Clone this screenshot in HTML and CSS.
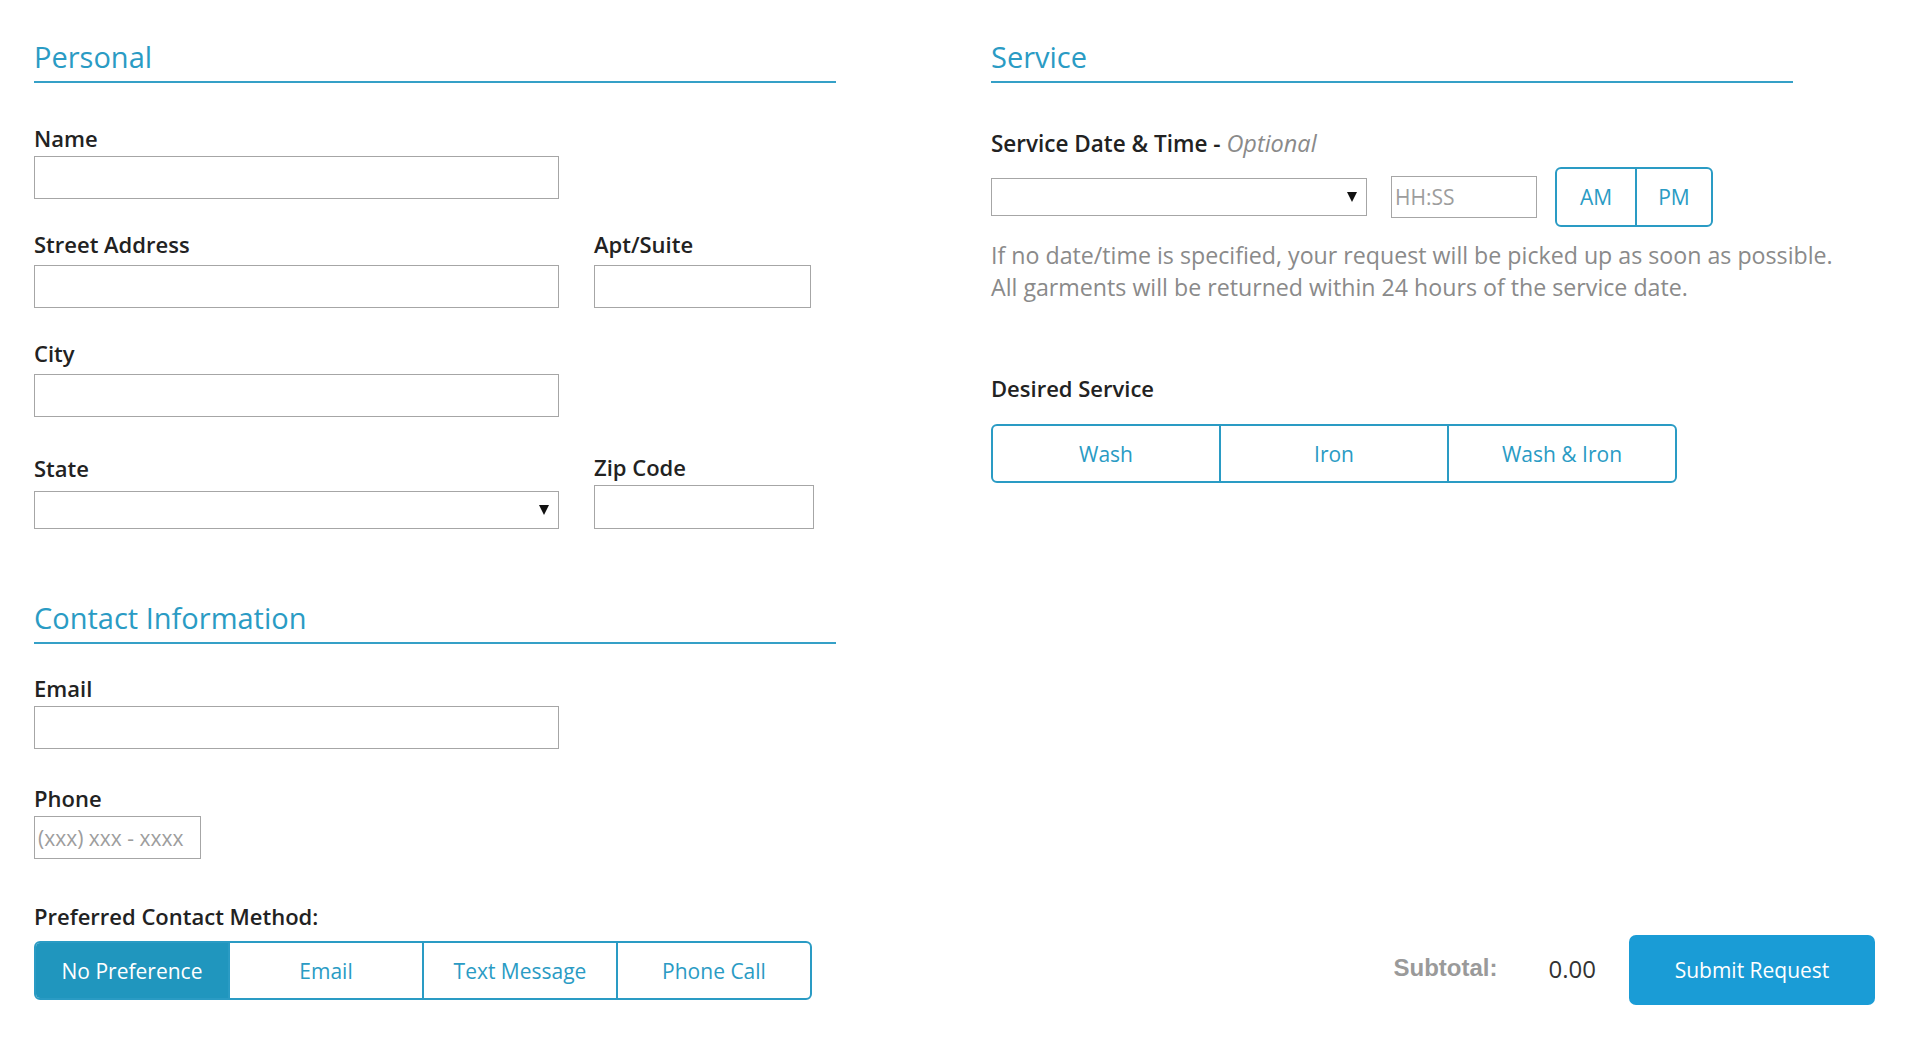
FILE: index.html
```html
<!DOCTYPE html>
<html lang="en">
<head>
<meta charset="utf-8">
<title>Service Request</title>
<link rel="stylesheet" href="styles.css">
</head>
<body>
<form class="page">
  <section class="col col-left">
    <h2 class="section-title">Personal</h2>

    <div class="field gap-first">
      <label class="label">Name</label>
      <input class="input w-wide" type="text">
    </div>

    <div class="row gap-field">
      <div class="field">
        <label class="label label-loose">Street Address</label>
        <input class="input w-wide" type="text">
      </div>
      <div class="field">
        <label class="label label-loose">Apt/Suite</label>
        <input class="input w-apt" type="text">
      </div>
    </div>

    <div class="field gap-field">
      <label class="label label-loose">City</label>
      <input class="input w-wide" type="text">
    </div>

    <div class="row row-end gap-state">
      <div class="field">
        <label class="label label-state">State</label>
        <div class="select w-wide"><span class="caret"></span></div>
      </div>
      <div class="field">
        <label class="label">Zip Code</label>
        <input class="input w-zip" type="text">
      </div>
    </div>

    <h2 class="section-title gap-section">Contact Information</h2>

    <div class="field gap-contact-first">
      <label class="label">Email</label>
      <input class="input w-wide" type="text">
    </div>

    <div class="field gap-phone">
      <label class="label">Phone</label>
      <input class="input w-phone" type="text" placeholder="(xxx) xxx - xxxx">
    </div>

    <div class="field gap-pref">
      <label class="label label-pref">Preferred Contact Method:</label>
      <div class="seg-group seg-contact">
        <span class="seg active">No Preference</span>
        <span class="seg">Email</span>
        <span class="seg">Text Message</span>
        <span class="seg">Phone Call</span>
      </div>
    </div>
  </section>

  <section class="col col-right">
    <h2 class="section-title">Service</h2>

    <div class="field gap-service-first">
      <label class="label label-date">Service Date &amp; Time - <em class="optional">Optional</em></label>
      <div class="datetime">
        <div class="select w-date"><span class="caret"></span></div>
        <input class="input w-time" type="text" placeholder="HH:SS">
        <div class="seg-group seg-ampm">
          <span class="seg seg-am">AM</span>
          <span class="seg seg-pm">PM</span>
        </div>
      </div>
    </div>

    <p class="help">If no date/time is specified, your request will be picked up as soon as possible.<br>All garments will be returned within 24 hours of the service date.</p>

    <div class="field gap-desired">
      <label class="label label-desired">Desired Service</label>
      <div class="seg-group seg-service">
        <span class="seg">Wash</span>
        <span class="seg">Iron</span>
        <span class="seg">Wash &amp; Iron</span>
      </div>
    </div>

    <div class="footer">
      <span class="subtotal-label">Subtotal:</span>
      <span class="subtotal-value">0.00</span>
      <button class="submit" type="button">Submit Request</button>
    </div>
  </section>
</form>
</body>
</html>
```

FILE: styles.css
```css
* {
  box-sizing: border-box;
}

body {
  margin: 0;
  background: #ffffff;
  font-family: "Open Sans", "Noto Sans", sans-serif;
  color: #222222;
}

.page {
  display: grid;
  grid-template-columns: 802px 884px;
  column-gap: 155px;
  padding: 37px 39px 0 34px;
}

.col {
  display: flex;
  flex-direction: column;
  align-items: flex-start;
}

.col-left {
  padding-bottom: 5px;
}

.section-title {
  margin: 0;
  width: 802px;
  font-size: 29px;
  line-height: 40px;
  font-weight: 400;
  color: #2a9bc4;
  padding-bottom: 4px;
  border-bottom: 2px solid #35a0c7;
}

.field {
  display: flex;
  flex-direction: column;
  align-items: flex-start;
}

.label {
  display: block;
  font-size: 22px;
  line-height: 28px;
  font-weight: 600;
  color: #222222;
  margin-bottom: 4px;
}

.label-loose {
  margin-bottom: 7px;
}

.label-state {
  margin-bottom: 9px;
}

.label-pref {
  margin-bottom: 11px;
}

.label-date {
  margin-bottom: 9px;
  font-size: 22.5px;
}

.label-desired {
  margin-bottom: 22px;
}

.optional {
  font-weight: 400;
  font-style: italic;
  font-size: 23.5px;
  color: #8a8a8a;
}

.input {
  display: block;
  height: 43px;
  margin: 0;
  padding: 0 3px;
  border: 1px solid #a6a6a6;
  border-radius: 0;
  background: #ffffff;
  font-family: "Open Sans", "Noto Sans", sans-serif;
  font-size: 21px;
  color: #333333;
  outline: none;
}

.input::placeholder {
  color: #9d9d9d;
}

.select {
  display: flex;
  align-items: center;
  justify-content: flex-end;
  height: 38px;
  padding-right: 9px;
  border: 1px solid #a6a6a6;
  background: #ffffff;
}

.caret {
  width: 0;
  height: 0;
  border-left: 5px solid transparent;
  border-right: 5px solid transparent;
  border-top: 10px solid #111111;
}

.w-wide { width: 525px; }
.w-apt { width: 217px; }
.w-zip { width: 220px; height: 44px; }
.w-phone { width: 167px; height: 43px; }
.w-date { width: 376px; }
.w-time { width: 146px; height: 42px; }

.row {
  display: grid;
  grid-template-columns: 525px 220px;
  column-gap: 35px;
}

.row-end {
  align-items: end;
}

.gap-first { margin-top: 41px; }
.gap-field { margin-top: 31px; }
.gap-state { margin-top: 36px; }
.gap-section { margin-top: 69px; }
.gap-contact-first { margin-top: 30px; }
.gap-phone { margin-top: 35px; }
.gap-pref { margin-top: 43px; }
.gap-service-first { margin-top: 46px; }
.gap-desired { margin-top: 71px; }

.datetime {
  display: flex;
  align-items: center;
}

.datetime .w-time {
  margin-left: 24px;
}

.seg-group {
  display: flex;
  border: 2px solid #2a9bc4;
  border-radius: 6px;
  overflow: hidden;
  background: #ffffff;
}

.seg {
  flex: 1;
  display: flex;
  align-items: center;
  justify-content: center;
  font-size: 21px;
  color: #2a9bc4;
  white-space: nowrap;
}

.seg + .seg {
  border-left: 2px solid #2a9bc4;
}

.seg.active {
  background: #2096be;
  color: #ffffff;
}

.seg-contact {
  width: 778px;
  height: 59px;
}

.seg-ampm {
  margin-left: 18px;
  width: 158px;
  height: 60px;
}

.seg-am {
  flex: 0 0 78px;
}

.seg-service {
  width: 686px;
  height: 59px;
}

.help {
  margin: 12px 0 0;
  font-size: 23.2px;
  line-height: 32px;
  color: #8a8a8a;
}

.footer {
  margin-top: auto;
  align-self: stretch;
  display: flex;
  align-items: center;
  justify-content: flex-end;
}

.subtotal-label {
  font-family: "Liberation Sans", Arial, sans-serif;
  font-weight: 700;
  font-size: 24px;
  color: #9a9a9a;
  margin-bottom: 5px;
}

.subtotal-value {
  margin-left: 51px;
  margin-bottom: 3px;
  font-size: 24px;
  color: #333333;
}

.submit {
  margin-left: 33px;
  width: 246px;
  height: 70px;
  border: 0;
  border-radius: 7px;
  background: #1a9cd6;
  color: #ffffff;
  font-family: "Open Sans", "Noto Sans", sans-serif;
  font-size: 21px;
  cursor: pointer;
}
```
